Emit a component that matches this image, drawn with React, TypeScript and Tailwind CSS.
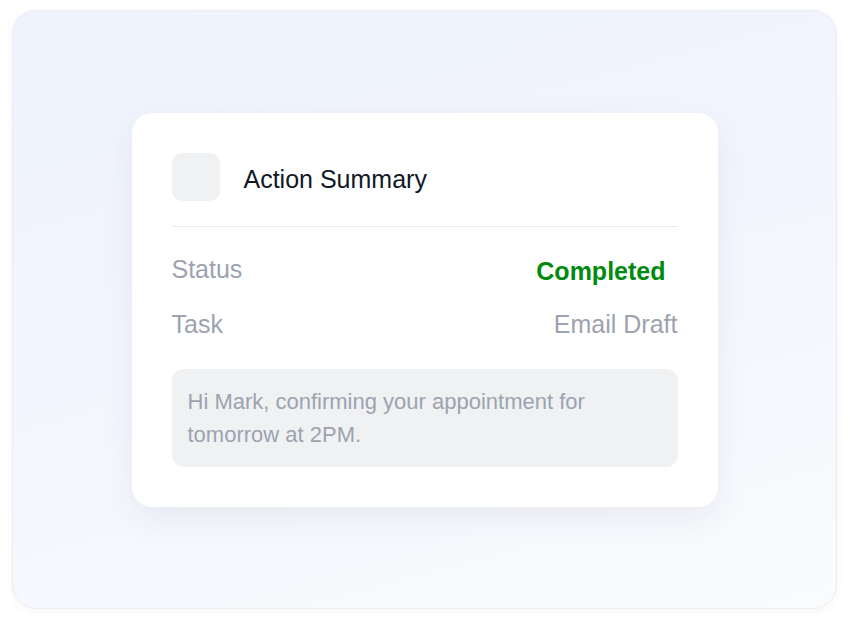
export default function App() {
  return (
    <div className="w-[850px] h-[624px] bg-white pl-3 pr-[13px] pt-[10px] pb-[15px] font-['Liberation_Sans',Arial,sans-serif]">
      <div className="h-full w-full rounded-[24px] border border-[#ecedf0] shadow-[0_2px_8px_rgba(0,0,0,0.04)] bg-[linear-gradient(165deg,#eef3fd_0%,#f3f5fe_45%,#fafbfd_100%)] flex items-start justify-center pt-[102px]">
        {/* Card */}
        <div className="w-[586px] rounded-[20px] bg-white p-10 shadow-[0_12px_32px_rgba(40,50,90,0.07)]">
          <div className="flex items-center gap-6 pb-[25px] border-b border-[#e9eaed]">
            <div className="w-12 h-12 rounded-[10px] bg-[#f0f1f3]" />
            <div className="text-[25px] font-medium text-[#111827] pt-[6px]">Action Summary</div>
          </div>

          <div className="mt-[25px] flex items-center justify-between h-9">
            <span className="text-[25px] text-[#9ca3af]">Status</span>
            <span className="text-[25px] font-bold text-[#008a0e] pr-3 pt-1">Completed</span>
          </div>
          <div className="mt-[19px] flex items-center justify-between h-9">
            <span className="text-[25px] text-[#9ca3af]">Task</span>
            <span className="text-[25px] text-[#9ca3af]">Email Draft</span>
          </div>

          <div className="mt-[26px] rounded-xl bg-[#f0f1f3] px-4 py-4 text-[22px] leading-[33px] text-[#9ca3af]">
            Hi Mark, confirming your appointment for tomorrow at 2PM.
          </div>
        </div>
      </div>
    </div>
  );
}
